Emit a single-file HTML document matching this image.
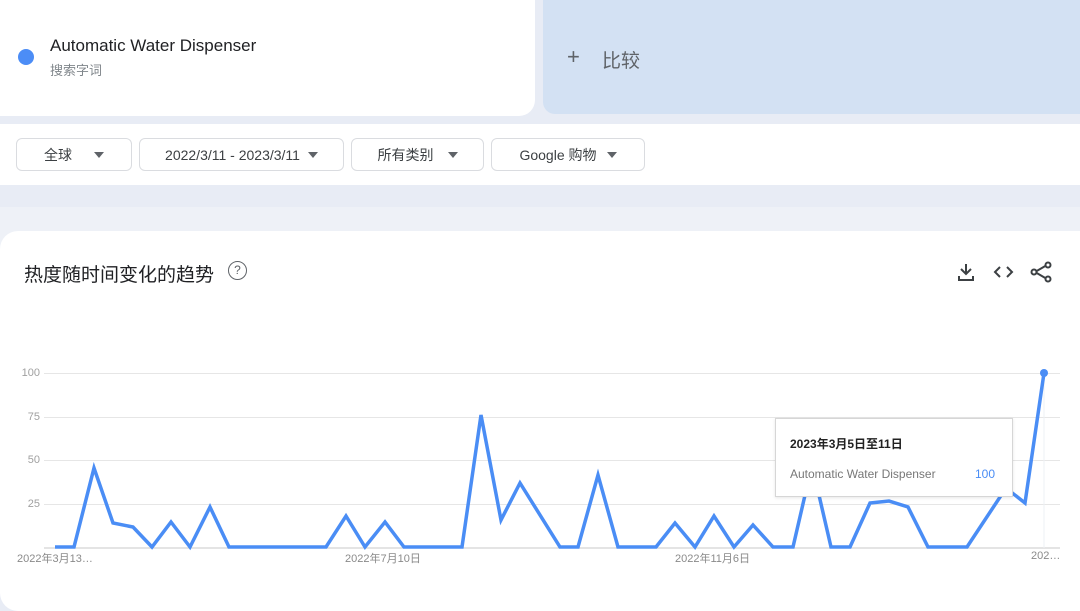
<!DOCTYPE html>
<html><head><meta charset="utf-8"><style>
*{margin:0;padding:0;box-sizing:border-box}
body{width:1080px;height:579px;overflow:hidden;background:#e8ecf5;font-family:"Liberation Sans","Noto Sans CJK SC",sans-serif;position:relative}
.abs{position:absolute}
.card1{left:-20px;top:-20px;width:555px;height:136px;background:#fff;border-radius:16px}
.cmp{left:543px;top:-20px;width:560px;height:134px;background:#d3e1f3;border-radius:12px}
.bar{left:-20px;top:124px;width:1120px;height:61px;background:#fff;border-radius:12px}
.chip{top:138px;height:33px;border:1px solid #dadce0;border-radius:6px;background:#fff;font-size:14px;color:#3c4043;display:flex;align-items:center;justify-content:center}
.tri{display:inline-block;width:0;height:0;border-left:5px solid transparent;border-right:5px solid transparent;border-top:6px solid #5f6368;margin-left:14px}
.lower{left:0;top:207px;width:1080px;height:372px;background:#eef1f7}
.card2{left:0;top:231px;width:1100px;height:380px;background:#fff;border-radius:18px}
.yl{font-size:11px;color:#a0a0a0;width:40px;text-align:right;left:0}
.xl{font-size:11px;color:#8a8a8a;top:550px}
</style></head><body>
<div class="abs card1"></div>
<div class="abs" style="left:18px;top:49px;width:16px;height:16px;border-radius:50%;background:#4c8df6"></div>
<div class="abs" style="left:50px;top:36px;font-size:17px;color:#202124">Automatic Water Dispenser</div>
<div class="abs" style="left:50px;top:60px;font-size:13px;color:#80868b">搜索字词</div>
<div class="abs cmp"></div>
<div class="abs" style="left:567px;top:44px;font-size:22px;color:#5f6368;font-weight:300">+</div>
<div class="abs" style="left:602px;top:46px;font-size:19px;color:#5f6368">比较</div>
<div class="abs bar"></div>
<div class="abs chip" style="left:16px;width:116px">全球<span class="tri" style="margin-left:22px"></span></div>
<div class="abs chip" style="left:139px;width:205px">2022/3/11 - 2023/3/11<span class="tri" style="margin-left:8px"></span></div>
<div class="abs chip" style="left:351px;width:133px">所有类别<span class="tri"></span></div>
<div class="abs chip" style="left:491px;width:154px">Google 购物<span class="tri" style="margin-left:10px"></span></div>
<div class="abs lower"></div>
<div class="abs card2"></div>
<div class="abs" style="left:24px;top:260px;font-size:19px;color:#202124">热度随时间变化的趋势</div>
<div class="abs" style="left:228px;top:261px;width:19px;height:19px;border:1.8px solid #5f6368;border-radius:50%;font-size:12px;color:#5f6368;text-align:center;line-height:16px">?</div>
<svg class="abs" style="left:955px;top:260px" width="100" height="24" viewBox="0 0 100 24">
<g fill="none" stroke="#3c4043" stroke-width="2">
<path d="M11 4v10M6 9l5 5 5-5M4 16v4h14v-4"/>
<path d="M45 7l-5 5 5 5M52 7l5 5-5 5"/>
<path d="M92 5l-12 7 12 7"/>
</g>
<g fill="#fff" stroke="#3c4043" stroke-width="2"><circle cx="93" cy="5" r="2.5"/><circle cx="79" cy="12" r="2.5"/><circle cx="93" cy="19" r="2.5"/></g>
</svg>
<svg class="abs" style="left:0;top:0" width="1080" height="579">
<g stroke="#e6e6e6" stroke-width="1">
<line x1="44" y1="373.5" x2="1060" y2="373.5"/><line x1="44" y1="417.5" x2="1060" y2="417.5"/>
<line x1="44" y1="460.5" x2="1060" y2="460.5"/><line x1="44" y1="504.5" x2="1060" y2="504.5"/>
</g>
<line x1="44" y1="548" x2="1060" y2="548" stroke="#c8c8c8"/>
<line x1="1044" y1="373" x2="1044" y2="548" stroke="#eef0f4"/>
<polyline fill="none" stroke="#4a8df5" stroke-width="3.5" stroke-linejoin="miter" points="55,547 74,547 94,468 113,523 133,527 152,547 171,522 190,547 210,507 229,547 326,547 346,516 365,547 385,522 404,547 462,547 481,415 501,520 520,483 560,547 578,547 598,475 618,547 656,547 675,523 695,547 714,516 734,547 753,525 773,547 793,547 812,465 831,547 850,547 870,503 889,501 908,507 928,547 967,547 1006,488 1025,503 1044,373"/>
<circle cx="1044" cy="373" r="4" fill="#4a8df5"/>
</svg>
<div class="abs yl" style="top:367px">100</div>
<div class="abs yl" style="top:411px">75</div>
<div class="abs yl" style="top:454px">50</div>
<div class="abs yl" style="top:498px">25</div>
<div class="abs xl" style="left:17px">2022年3月13…</div>
<div class="abs xl" style="left:345px">2022年7月10日</div>
<div class="abs xl" style="left:675px">2022年11月6日</div>
<div class="abs xl" style="left:1031px">202…</div>
<div class="abs" style="left:775px;top:418px;width:238px;height:79px;background:#fff;border:1px solid #d6d6d6;box-shadow:0 1px 3px rgba(0,0,0,.1)"></div>
<div class="abs" style="left:790px;top:435px;font-size:12px;font-weight:bold;color:#222">2023年3月5日至11日</div>
<div class="abs" style="left:790px;top:467px;font-size:12px;color:#777">Automatic Water Dispenser</div>
<div class="abs" style="left:975px;top:467px;font-size:12px;color:#4a8df5">100</div>
</body></html>
